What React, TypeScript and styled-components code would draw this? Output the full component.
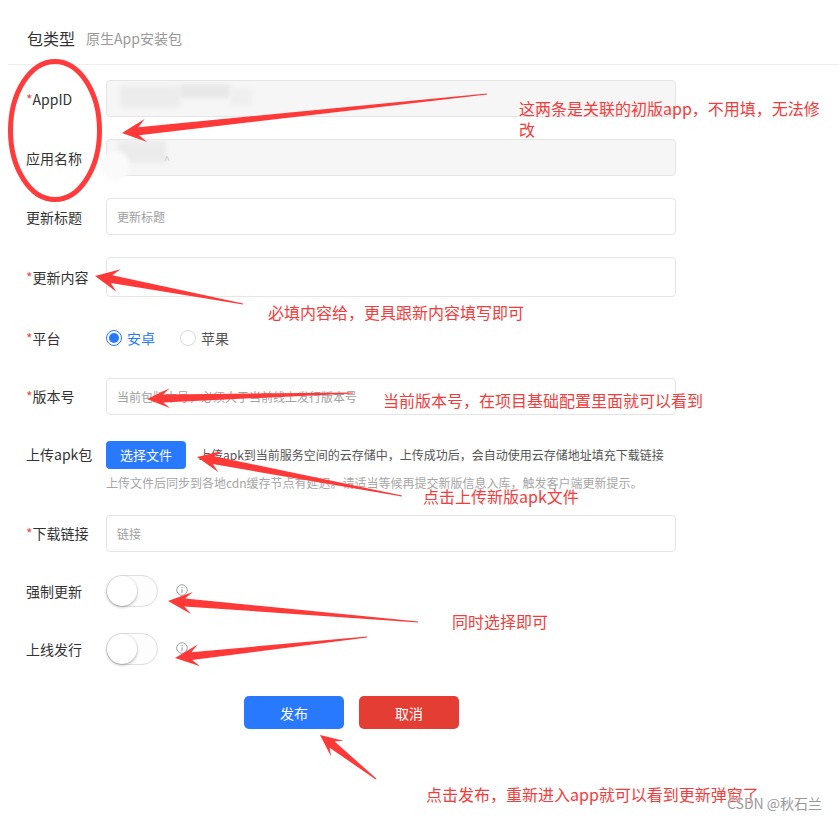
import React from "react";
import styled, { createGlobalStyle } from "styled-components";

const GlobalStyle = createGlobalStyle`
  html, body {
    margin: 0;
    padding: 0;
    background: #fff;
  }
  body {
    font-family: "Noto Sans CJK SC", "Noto Sans", sans-serif;
    color: #333;
  }
  * {
    box-sizing: border-box;
  }
`;

const Page = styled.div`
  position: relative;
  width: 839px;
  height: 818px;
  overflow: hidden;
  padding-left: 8px;
`;

const Header = styled.div`
  display: flex;
  align-items: center;
  height: 65px;
  padding: 12px 0 0 19px;
  border-bottom: 1px solid #eee;
`;

const Title = styled.span`
  font-size: 16px;
  color: #333;
`;

const SubTitle = styled.span`
  margin-left: 11px;
  font-size: 14px;
  color: #999;
`;

const Form = styled.div`
  padding: 15px 0 0 18px;
`;

const Row = styled.div<{ $top?: boolean; $h?: number; $gap?: number }>`
  display: flex;
  align-items: ${(p) => (p.$top ? "flex-start" : "center")};
  height: ${(p) => (p.$top ? "auto" : `${p.$h ?? 37}px`)};
  margin-bottom: ${(p) => p.$gap ?? 22}px;
`;

const Label = styled.div<{ $line?: number }>`
  width: 80px;
  flex-shrink: 0;
  font-size: 14px;
  line-height: ${(p) => p.$line ?? 20}px;
  color: #333;
  white-space: nowrap;
`;

const Star = styled.span`
  color: #dd524d;
`;

const FieldWrap = styled.div`
  position: relative;
  width: 570px;
`;

const Field = styled.input<{ $locked?: boolean; $tall?: boolean }>`
  display: block;
  width: 570px;
  height: ${(p) => (p.$tall ? 40 : 37)}px;
  padding: 0 10px;
  border: 1px solid #e5e5e5;
  border-radius: 4px;
  background: ${(p) => (p.$locked ? "#f6f6f6" : "#fff")};
  font-family: inherit;
  font-size: 12px;
  color: #333;
  outline: none;
  &::placeholder {
    color: #a0a0a0;
  }
`;

const Smudge = styled.div<{ $x: number; $y: number; $w: number; $h: number; $c: string; $r?: number }>`
  position: absolute;
  left: ${(p) => p.$x}px;
  top: ${(p) => p.$y}px;
  width: ${(p) => p.$w}px;
  height: ${(p) => p.$h}px;
  background: ${(p) => p.$c};
  border-radius: ${(p) => p.$r ?? 2}px;
  filter: blur(2px);
`;

const Caret = styled.span`
  position: absolute;
  left: 58px;
  top: 12px;
  font-size: 11px;
  color: #c8c8c8;
`;

const RadioGroup = styled.div`
  display: flex;
  align-items: center;
  gap: 25px;
`;

const RadioOption = styled.label<{ $on?: boolean }>`
  display: flex;
  align-items: center;
  font-size: 14px;
  color: ${(p) => (p.$on ? "#2979ff" : "#555")};
`;

const RadioDot = styled.span<{ $on?: boolean }>`
  display: flex;
  align-items: center;
  justify-content: center;
  width: 16px;
  height: 16px;
  margin-right: 5px;
  border-radius: 50%;
  border: 1px solid ${(p) => (p.$on ? "#2979ff" : "#d8d8d8")};
  background: #fff;
  &::after {
    content: "";
    width: 10px;
    height: 10px;
    border-radius: 50%;
    background: ${(p) => (p.$on ? "#2979ff" : "transparent")};
  }
`;

const UploadBox = styled.div`
  display: flex;
  flex-direction: column;
`;

const UploadLine = styled.div`
  display: flex;
  align-items: center;
  height: 37px;
`;

const PickButton = styled.button`
  width: 80px;
  height: 28px;
  border: none;
  border-radius: 4px;
  background: #2979ff;
  color: #fff;
  font-family: inherit;
  font-size: 13px;
`;

const UploadText = styled.span`
  margin-left: 13px;
  font-size: 12px;
  color: #555;
  white-space: nowrap;
`;

const Hint = styled.div`
  font-size: 12px;
  line-height: 20px;
  color: #a6a6a6;
  white-space: nowrap;
`;

const Switch = styled.div`
  display: flex;
  align-items: center;
  width: 52px;
  height: 32px;
  border: 1px solid #dfdfdf;
  border-radius: 16px;
  background: #fdfdfd;
`;

const Knob = styled.span`
  width: 30px;
  height: 30px;
  border-radius: 50%;
  background: #fff;
  box-shadow: 0 1px 3px rgba(0, 0, 0, 0.35);
`;

const InfoIcon = styled.svg`
  margin-left: 18px;
  margin-top: -2px;
`;

const Actions = styled.div`
  display: flex;
  gap: 15px;
  padding: 7px 0 0 218px;
`;

const ActionButton = styled.button<{ $tone: "primary" | "danger" }>`
  width: 100px;
  height: 33px;
  border: none;
  border-radius: 5px;
  background: ${(p) => (p.$tone === "primary" ? "#2979ff" : "#e43d33")};
  color: #fff;
  font-family: inherit;
  font-size: 14px;
`;

/* annotation layer drawn over the screenshot */
const Overlay = styled.svg`
  position: absolute;
  left: 0;
  top: 0;
  pointer-events: none;
`;

const Note = styled.div<{ $x: number; $y: number; $w?: number }>`
  position: absolute;
  left: ${(p) => p.$x}px;
  top: ${(p) => p.$y}px;
  width: ${(p) => (p.$w ? `${p.$w}px` : "auto")};
  font-size: 16px;
  line-height: 21px;
  color: #f53b3b;
  white-space: ${(p) => (p.$w ? "normal" : "nowrap")};
`;

const Watermark = styled.div`
  position: absolute;
  left: 727px;
  top: 794px;
  font-size: 14px;
  line-height: 18px;
  color: #9a9a9a;
  text-shadow: 0 0 2px #fff, 0 0 2px #fff;
  white-space: nowrap;
`;

type Arrow = [number, number, number, number, number?, number?];

const arrows: Arrow[] = [
  [487, 94, 122, 133, 24, 11.5],
  [243, 304, 95, 276, 24, 11.5],
  [353, 393, 147, 399, 23, 10],
  [402, 496, 197, 457, 24, 11],
  [418, 622, 168, 601, 24, 11],
  [367, 637, 175, 658, 24, 11],
  [376, 779, 320, 735, 22, 10],
];

const arrowPoints = ([tx, ty, px, py, head = 23, hw = 11]: Arrow) => {
  const len = Math.hypot(px - tx, py - ty);
  const ux = (px - tx) / len;
  const uy = (py - ty) / len;
  const nx = -uy;
  const ny = ux;
  const neck = 4;
  const bx = px - ux * head;
  const by = py - uy * head;
  const kx = px - ux * head * 0.7;
  const ky = py - uy * head * 0.7;
  const pts = [
    [tx + nx * 0.5, ty + ny * 0.5],
    [kx + nx * neck, ky + ny * neck],
    [bx + nx * hw, by + ny * hw],
    [px, py],
    [bx - nx * hw, by - ny * hw],
    [kx - nx * neck, ky - ny * neck],
    [tx - nx * 0.5, ty - ny * 0.5],
  ];
  return pts.map(([x, y]) => `${x.toFixed(1)},${y.toFixed(1)}`).join(" ");
};

const Info = () => (
  <InfoIcon width="12" height="12" viewBox="0 0 12 12">
    <circle cx="6" cy="6" r="5.3" fill="none" stroke="#9ba3ad" strokeWidth="1" />
    <circle cx="6" cy="3.5" r="0.8" fill="#9ba3ad" />
    <line x1="6" y1="5.2" x2="6" y2="9" stroke="#9ba3ad" strokeWidth="1.2" />
  </InfoIcon>
);

export default function App() {
  return (
    <Page>
      <GlobalStyle />
      <Header>
        <Title>包类型</Title>
        <SubTitle>原生App安装包</SubTitle>
      </Header>

      <Form>
        <Row>
          <Label>
            <Star>*</Star>AppID
          </Label>
          <FieldWrap>
            <Field $locked readOnly />
            <Smudge $x={14} $y={6} $w={60} $h={22} $c="#ececec" />
            <Smudge $x={74} $y={4} $w={50} $h={14} $c="#e8e8e8" />
            <Smudge $x={124} $y={8} $w={22} $h={18} $c="#efefef" />
          </FieldWrap>
        </Row>
        <Row>
          <Label>应用名称</Label>
          <FieldWrap>
            <Field $locked readOnly />
            <Smudge $x={12} $y={2} $w={48} $h={22} $c="#ebebeb" />
            <Smudge $x={-6} $y={12} $w={30} $h={30} $c="#fafafa" $r={15} />
            <Caret>^</Caret>
          </FieldWrap>
        </Row>
        <Row>
          <Label>更新标题</Label>
          <Field placeholder="更新标题" readOnly />
        </Row>
        <Row $h={40}>
          <Label>
            <Star>*</Star>更新内容
          </Label>
          <Field $tall readOnly />
        </Row>
        <Row>
          <Label>
            <Star>*</Star>平台
          </Label>
          <RadioGroup>
            <RadioOption $on>
              <RadioDot $on />
              安卓
            </RadioOption>
            <RadioOption>
              <RadioDot />
              苹果
            </RadioOption>
          </RadioGroup>
        </Row>
        <Row $h={36}>
          <Label>
            <Star>*</Star>版本号
          </Label>
          <Field placeholder="当前包版本号，必须大于当前线上发行版本号" readOnly />
        </Row>
        <Row $top>
          <Label $line={37}>上传apk包</Label>
          <UploadBox>
            <UploadLine>
              <PickButton>选择文件</PickButton>
              <UploadText>
                上传apk到当前服务空间的云存储中，上传成功后，会自动使用云存储地址填充下载链接
              </UploadText>
            </UploadLine>
            <Hint>
              上传文件后同步到各地cdn缓存节点有延迟。请适当等候再提交新版信息入库，触发客户端更新提示。
            </Hint>
          </UploadBox>
        </Row>
        <Row $h={36}>
          <Label>
            <Star>*</Star>下载链接
          </Label>
          <Field placeholder="链接" readOnly />
        </Row>
        <Row $h={36}>
          <Label>强制更新</Label>
          <Switch>
            <Knob />
          </Switch>
          <Info />
        </Row>
        <Row $h={36}>
          <Label>上线发行</Label>
          <Switch>
            <Knob />
          </Switch>
          <Info />
        </Row>
        <Actions>
          <ActionButton $tone="primary">发布</ActionButton>
          <ActionButton $tone="danger">取消</ActionButton>
        </Actions>
      </Form>

      <Overlay width="839" height="818" viewBox="0 0 839 818">
        <ellipse cx="55" cy="130.5" rx="44.5" ry="69" fill="none" stroke="#ff3b3b" strokeWidth="5" />
        {arrows.map((a, i) => (
          <polygon key={i} points={arrowPoints(a)} fill="#ff3838" />
        ))}
      </Overlay>

      <Note $x={519} $y={98} $w={308}>
        这两条是关联的初版app，不用填，无法修改
      </Note>
      <Note $x={268} $y={302}>必填内容给，更具跟新内容填写即可</Note>
      <Note $x={383} $y={390}>当前版本号，在项目基础配置里面就可以看到</Note>
      <Note $x={423} $y={486}>点击上传新版apk文件</Note>
      <Note $x={452} $y={611}>同时选择即可</Note>
      <Note $x={426} $y={784}>点击发布，重新进入app就可以看到更新弹窗了</Note>
      <Watermark>CSDN @秋石兰</Watermark>
    </Page>
  );
}
